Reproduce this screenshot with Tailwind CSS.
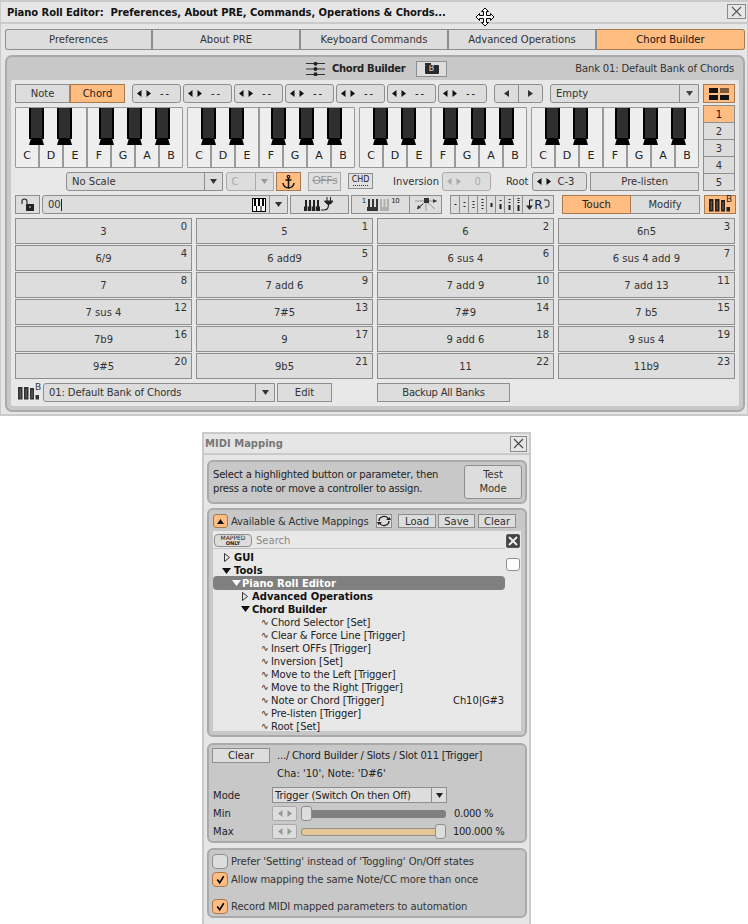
<!DOCTYPE html>
<html lang="en">
<head>
<meta charset="utf-8">
<title>Piano Roll Editor</title>
<script src="https://cdn.jsdelivr.net/npm/@tailwindcss/browser@4"></script>
</head>
<body class="bg-white overflow-hidden font-['DejaVu_Sans',sans-serif] text-[10px] text-[#333]">
<svg class="hidden" width="0" height="0">
  <symbol id="blk" viewBox="0 0 15 37"><rect width="15" height="31" fill="#000"/><rect x="2" width="11" height="31" fill="#2f2f2f"/><path d="M2 30H13L15 37H0Z" fill="#000"/></symbol>
  <symbol id="spin" viewBox="0 0 14 7"><path d="M4.5 0V7L0 3.5Z M9.5 0V7L14 3.5Z" fill="currentColor"/></symbol>
  <symbol id="down" viewBox="0 0 7 5"><path d="M0 0H7L3.5 5Z" fill="currentColor"/></symbol>
  <symbol id="chk" viewBox="0 0 16 16"><path d="M4 8L7 12L12 4" fill="none" stroke="#000" stroke-width="2"/></symbol>
  <symbol id="bank" viewBox="0 0 21 13"><path d="M0 0h4.500v12.500H0zM6 0h4.500v12.500H6zM12 1h4v11.500h-4zM17.500 8h3.500v4.500h-3.500z" fill="currentColor"/><path d="M2.200 2v9M8.200 2v9M14 3v8" stroke="#666" stroke-width="1"/></symbol>
</svg>

<!-- Piano Roll Editor window -->
<div class="relative w-[748px] h-[416px] bg-[#e6e6e6] border-x border-t-2 border-b-2 border-[#cacaca]">
  <div class="flex items-center h-[20px] pl-[6px] font-bold text-[10px] text-[#111]">
    <span class="whitespace-pre tracking-[-0.07px]">Piano Roll Editor:  Preferences, About PRE, Commands, Operations &amp; Chords...</span>
    <div class="ml-auto mr-[1px] mt-[-2px] w-[19px] h-[15px] flex items-center justify-center border border-[#8a8a8a] bg-[#e6e6e6]"><svg width="11" height="11" viewBox="0 0 11 11"><path d="M1 1L10 10M10 1L1 10" stroke="#555" stroke-width="1.100"/></svg></div>
  </div>
  <div class="h-[2px] bg-[#cacaca]"></div>

  <svg class="absolute left-[474px] top-[5px]" width="20" height="20" viewBox="0 0 20 20"><path d="M10 1L13.500 4.500H11.500V8.500H15.500V6.500L19 10L15.500 13.500V11.500H11.500V15.500H13.500L10 19L6.500 15.500H8.500V11.500H4.500V13.500L1 10L4.500 6.500V8.500H8.500V4.500H6.500Z" fill="#fff" stroke="#000" stroke-width="1"/></svg>

  <div class="flex w-[740px] h-[21px] ml-[4px] mt-[5px]">
    <div class="w-[148px] flex items-center justify-center border border-r-2 border-[#8e8e8e] bg-[#dcdddc] rounded-l-[3px]">Preferences</div>
    <div class="w-[148px] flex items-center justify-center border-y border-r-2 border-[#8e8e8e] bg-[#dcdddc]">About PRE</div>
    <div class="w-[148px] flex items-center justify-center border-y border-r-2 border-[#8e8e8e] bg-[#dcdddc]">Keyboard Commands</div>
    <div class="w-[148px] flex items-center justify-center border-y border-r-2 border-[#8e8e8e] bg-[#dcdddc]">Advanced Operations</div>
    <div class="w-[148px] flex items-center justify-center border-y border-r border-[#a8794f] bg-[#ffbd82] text-[#111] rounded-r-[3px]">Chord Builder</div>
  </div>

  <!-- Chord builder panel -->
  <div class="w-[740px] h-[357px] ml-[4px] mt-[5px] border-2 border-[#aaa] rounded-[7px] bg-[#c8c8c8] px-[4px] pb-[4px] flex flex-col">
    <div class="h-[23px] flex items-center shrink-0">
      <svg class="ml-[295px]" width="19" height="14" viewBox="0 0 19 14"><path d="M0 1.500H19M0 7H19M0 12.500H19" stroke="#333" stroke-width="1"/><circle cx="9.500" cy="1.800" r="2" fill="#222"/><circle cx="9.500" cy="7" r="2" fill="#222"/><circle cx="9.500" cy="12.200" r="2" fill="#222"/></svg>
      <span class="ml-[7px] w-[74px] whitespace-nowrap font-bold text-[#222] tracking-[-0.3px]">Chord Builder</span>
      <div class="ml-[10px] w-[31px] h-[16px] flex items-center justify-center border border-[#8e8e8e] bg-[#dcdddc]">
        <div class="relative w-[14px] h-[9px] mt-[1px] bg-[#2a2a2a] rounded-[1px] flex items-center justify-center text-[8px] leading-none text-[#ddd]"><span class="absolute left-0 top-[-2px] w-[6px] h-[2px] bg-[#2a2a2a]"></span>B</div>
      </div>
      <span class="ml-auto mr-[5px] text-[#333] tracking-[-0.15px]">Bank 01: Default Bank of Chords</span>
    </div>

    <div class="flex-1 bg-[#e8e8e8] pl-[4px] pt-[4px] rounded-[2px]">
      <div class="flex w-[720px] gap-[4px]">
        <!-- left -->
        <div class="w-[684px]">
          <div class="flex h-[19px]">
            <div class="w-[55px] flex items-center justify-center border border-[#8e8e8e] bg-[#dcdddc]">Note</div>
            <div class="w-[55px] flex items-center justify-center border border-[#a8794f] bg-[#ffbd82] text-[#222]">Chord</div>
            <div class="ml-[7px] w-[49px] flex items-center border border-[#8e8e8e] bg-[#dcdddc] rounded-[3px] pl-[4px] text-[#111]"><svg class="w-[14px] h-[7px]"><use href="#spin"/></svg><span class="ml-[9px] tracking-[2px]">--</span></div>
            <div class="ml-[2px] w-[49px] flex items-center border border-[#8e8e8e] bg-[#dcdddc] rounded-[3px] pl-[4px] text-[#111]"><svg class="w-[14px] h-[7px]"><use href="#spin"/></svg><span class="ml-[9px] tracking-[2px]">--</span></div>
            <div class="ml-[2px] w-[49px] flex items-center border border-[#8e8e8e] bg-[#dcdddc] rounded-[3px] pl-[4px] text-[#111]"><svg class="w-[14px] h-[7px]"><use href="#spin"/></svg><span class="ml-[9px] tracking-[2px]">--</span></div>
            <div class="ml-[2px] w-[49px] flex items-center border border-[#8e8e8e] bg-[#dcdddc] rounded-[3px] pl-[4px] text-[#111]"><svg class="w-[14px] h-[7px]"><use href="#spin"/></svg><span class="ml-[9px] tracking-[2px]">--</span></div>
            <div class="ml-[2px] w-[49px] flex items-center border border-[#8e8e8e] bg-[#dcdddc] rounded-[3px] pl-[4px] text-[#111]"><svg class="w-[14px] h-[7px]"><use href="#spin"/></svg><span class="ml-[9px] tracking-[2px]">--</span></div>
            <div class="ml-[2px] w-[49px] flex items-center border border-[#8e8e8e] bg-[#dcdddc] rounded-[3px] pl-[4px] text-[#111]"><svg class="w-[14px] h-[7px]"><use href="#spin"/></svg><span class="ml-[9px] tracking-[2px]">--</span></div>
            <div class="ml-[2px] w-[49px] flex items-center border border-[#8e8e8e] bg-[#dcdddc] rounded-[3px] pl-[4px] text-[#111]"><svg class="w-[14px] h-[7px]"><use href="#spin"/></svg><span class="ml-[9px] tracking-[2px]">--</span></div>
            <div class="ml-[7px] w-[49px] flex border border-[#8e8e8e] bg-[#dcdddc] rounded-[3px] text-[#333]">
              <div class="w-[24px] flex items-center justify-center border-r border-[#8e8e8e]"><svg width="5" height="7" viewBox="0 0 5 7"><path d="M5 0V7L0 3.500Z" fill="#333"/></svg></div>
              <div class="flex-1 flex items-center justify-center"><svg width="5" height="7" viewBox="0 0 5 7"><path d="M0 0V7L5 3.500Z" fill="#333"/></svg></div>
            </div>
            <div class="ml-[7px] w-[149px] flex items-center border border-[#8e8e8e] bg-[#dcdddc] rounded-l-[3px] pl-[5px]">Empty<div class="ml-auto w-[19px] h-full flex items-center justify-center border-l border-[#8e8e8e] text-[#444]"><svg class="w-[7px] h-[5px]"><use href="#down"/></svg></div></div>
          </div>

          <!-- piano -->
          <div class="flex gap-[4px] mt-[4px]">
            <div class="relative w-[168px] h-[61px] flex border border-[#999] bg-[#eee] rounded-[1px] text-[11px] text-[#222]">
              <div class="flex-1 flex items-end justify-center border-r-2 border-[#999] pb-[3px]">C</div><div class="flex-1 flex items-end justify-center border-r-2 border-[#999] pb-[3px]">D</div><div class="flex-1 flex items-end justify-center border-r-2 border-[#999] pb-[3px]">E</div><div class="flex-1 flex items-end justify-center border-r-2 border-[#999] pb-[3px]">F</div><div class="flex-1 flex items-end justify-center border-r-2 border-[#999] pb-[3px]">G</div><div class="flex-1 flex items-end justify-center border-r-2 border-[#999] pb-[3px]">A</div><div class="flex-1 flex items-end justify-center pb-[3px]">B</div>
              <svg class="absolute top-0 left-[13px] w-[15px] h-[37px]"><use href="#blk"/></svg><svg class="absolute top-0 left-[41px] w-[15px] h-[37px]"><use href="#blk"/></svg><svg class="absolute top-0 left-[83px] w-[15px] h-[37px]"><use href="#blk"/></svg><svg class="absolute top-0 left-[111px] w-[15px] h-[37px]"><use href="#blk"/></svg><svg class="absolute top-0 left-[139px] w-[15px] h-[37px]"><use href="#blk"/></svg>
            </div>
            <div class="relative w-[168px] h-[61px] flex border border-[#999] bg-[#eee] rounded-[1px] text-[11px] text-[#222]">
              <div class="flex-1 flex items-end justify-center border-r-2 border-[#999] pb-[3px]">C</div><div class="flex-1 flex items-end justify-center border-r-2 border-[#999] pb-[3px]">D</div><div class="flex-1 flex items-end justify-center border-r-2 border-[#999] pb-[3px]">E</div><div class="flex-1 flex items-end justify-center border-r-2 border-[#999] pb-[3px]">F</div><div class="flex-1 flex items-end justify-center border-r-2 border-[#999] pb-[3px]">G</div><div class="flex-1 flex items-end justify-center border-r-2 border-[#999] pb-[3px]">A</div><div class="flex-1 flex items-end justify-center pb-[3px]">B</div>
              <svg class="absolute top-0 left-[13px] w-[15px] h-[37px]"><use href="#blk"/></svg><svg class="absolute top-0 left-[41px] w-[15px] h-[37px]"><use href="#blk"/></svg><svg class="absolute top-0 left-[83px] w-[15px] h-[37px]"><use href="#blk"/></svg><svg class="absolute top-0 left-[111px] w-[15px] h-[37px]"><use href="#blk"/></svg><svg class="absolute top-0 left-[139px] w-[15px] h-[37px]"><use href="#blk"/></svg>
            </div>
            <div class="relative w-[168px] h-[61px] flex border border-[#999] bg-[#eee] rounded-[1px] text-[11px] text-[#222]">
              <div class="flex-1 flex items-end justify-center border-r-2 border-[#999] pb-[3px]">C</div><div class="flex-1 flex items-end justify-center border-r-2 border-[#999] pb-[3px]">D</div><div class="flex-1 flex items-end justify-center border-r-2 border-[#999] pb-[3px]">E</div><div class="flex-1 flex items-end justify-center border-r-2 border-[#999] pb-[3px]">F</div><div class="flex-1 flex items-end justify-center border-r-2 border-[#999] pb-[3px]">G</div><div class="flex-1 flex items-end justify-center border-r-2 border-[#999] pb-[3px]">A</div><div class="flex-1 flex items-end justify-center pb-[3px]">B</div>
              <svg class="absolute top-0 left-[13px] w-[15px] h-[37px]"><use href="#blk"/></svg><svg class="absolute top-0 left-[41px] w-[15px] h-[37px]"><use href="#blk"/></svg><svg class="absolute top-0 left-[83px] w-[15px] h-[37px]"><use href="#blk"/></svg><svg class="absolute top-0 left-[111px] w-[15px] h-[37px]"><use href="#blk"/></svg><svg class="absolute top-0 left-[139px] w-[15px] h-[37px]"><use href="#blk"/></svg>
            </div>
            <div class="relative w-[168px] h-[61px] flex border border-[#999] bg-[#eee] rounded-[1px] text-[11px] text-[#222]">
              <div class="flex-1 flex items-end justify-center border-r-2 border-[#999] pb-[3px]">C</div><div class="flex-1 flex items-end justify-center border-r-2 border-[#999] pb-[3px]">D</div><div class="flex-1 flex items-end justify-center border-r-2 border-[#999] pb-[3px]">E</div><div class="flex-1 flex items-end justify-center border-r-2 border-[#999] pb-[3px]">F</div><div class="flex-1 flex items-end justify-center border-r-2 border-[#999] pb-[3px]">G</div><div class="flex-1 flex items-end justify-center border-r-2 border-[#999] pb-[3px]">A</div><div class="flex-1 flex items-end justify-center pb-[3px]">B</div>
              <svg class="absolute top-0 left-[13px] w-[15px] h-[37px]"><use href="#blk"/></svg><svg class="absolute top-0 left-[41px] w-[15px] h-[37px]"><use href="#blk"/></svg><svg class="absolute top-0 left-[83px] w-[15px] h-[37px]"><use href="#blk"/></svg><svg class="absolute top-0 left-[111px] w-[15px] h-[37px]"><use href="#blk"/></svg><svg class="absolute top-0 left-[139px] w-[15px] h-[37px]"><use href="#blk"/></svg>
            </div>
          </div>

          <!-- scale row -->
          <div class="flex h-[19px] mt-[4px] items-stretch">
            <div class="ml-[51px] w-[157px] flex items-center border border-[#8e8e8e] bg-[#dcdddc] rounded-l-[3px] pl-[5px]">No Scale<div class="ml-auto w-[18px] h-full flex items-center justify-center border-l border-[#8e8e8e] text-[#333]"><svg class="w-[7px] h-[5px]"><use href="#down"/></svg></div></div>
            <div class="ml-[3px] w-[49px] flex items-center border border-[#aaa] bg-[#dcdddc] rounded-l-[3px] pl-[5px] text-[#aaa]">C<div class="ml-auto w-[18px] h-full flex items-center justify-center border-l border-[#aaa] text-[#999]"><svg class="w-[7px] h-[5px]"><use href="#down"/></svg></div></div>
            <div class="ml-[2px] w-[25px] flex items-center justify-center border border-[#a8794f] bg-[#ffbd82]"><svg width="13" height="14" viewBox="0 0 13 14"><circle cx="6.500" cy="1.800" r="1.300" fill="none" stroke="#111" stroke-width="1.100"/><path d="M6.500 3V13M3.500 5H9.500M1 8Q1.500 12.500 6.500 13Q11.500 12.500 12 8" fill="none" stroke="#111" stroke-width="1.500"/></svg></div>
            <div class="ml-[7px] w-[33px] flex items-center justify-center border border-[#aaa] bg-[#e0e0e0] text-[11px] tracking-[-0.5px] text-[#999] line-through">OFFs</div>
            <div class="ml-[7px] w-[25px] mb-[2px] mt-[1px] flex flex-col items-center border border-[#8e8e8e] bg-[#e0e0e0] text-[8px] leading-[9px] text-[#222]"><span class="mt-[1px]">CHD</span><span class="w-[15px] mt-[1px] border-t border-dotted border-[#333]"></span></div>
            <span class="ml-[20px] self-center text-[#333]">Inversion</span>
            <div class="ml-[3px] w-[49px] flex items-center border border-[#aaa] bg-[#dcdddc] rounded-[3px] pl-[4px] text-[#aaa]"><svg class="w-[14px] h-[7px]"><use href="#spin"/></svg><span class="ml-auto mr-[9px]">0</span></div>
            <span class="ml-[15px] self-center text-[#333]">Root</span>
            <div class="ml-[3px] w-[56px] flex items-center border border-[#8e8e8e] bg-[#dcdddc] rounded-[3px] pl-[4px] text-[#333]"><svg class="w-[14px] h-[7px] text-[#111]"><use href="#spin"/></svg><span class="ml-[7px]">C-3</span></div>
            <div class="ml-[3px] w-[109px] flex items-center justify-center border border-[#8e8e8e] bg-[#dcdddc]">Pre-listen</div>
          </div>
        </div>
        <!-- right -->
        <div class="w-[32px] flex flex-col">
          <div class="h-[19px] flex items-center justify-center border border-[#a8794f] bg-[#ffbd82]"><svg width="20" height="12" viewBox="0 0 20 12"><rect x="0" y="0" width="9" height="5" fill="#111"/><rect x="11" y="0" width="9" height="5" fill="#7e5a36"/><rect x="0" y="7" width="9" height="5" fill="#111"/><rect x="11" y="7" width="9" height="5" fill="#111"/></svg></div>
          <div class="mt-[2px] flex flex-col border-t border-[#8e8e8e]">
            <div class="h-[17px] flex items-center justify-center border-x border-b border-[#8e8e8e] bg-[#ffbd82] text-[#111]">1</div>
            <div class="h-[17px] flex items-center justify-center border-x border-b border-[#8e8e8e] bg-[#dcdddc]">2</div>
            <div class="h-[17px] flex items-center justify-center border-x border-b border-[#8e8e8e] bg-[#dcdddc]">3</div>
            <div class="h-[17px] flex items-center justify-center border-x border-b border-[#8e8e8e] bg-[#dcdddc]">4</div>
            <div class="h-[17px] flex items-center justify-center border-x border-b border-[#8e8e8e] bg-[#dcdddc]">5</div>
          </div>
        </div>
      </div>

      <!-- toolbar row -->
      <div class="flex h-[19px] mt-[4px]">
        <div class="w-[25px] flex items-center justify-center border border-[#8e8e8e] bg-[#dcdddc]"><svg width="13" height="13" viewBox="0 0 13 13"><path d="M1 6V3.500Q1 1 3.500 1T6 3.500V6" fill="none" stroke="#222" stroke-width="1.100"/><rect x="5" y="6" width="8" height="7" fill="#222"/><rect x="8" y="8.500" width="2" height="1" fill="#ddd"/></svg></div>
        <div class="ml-[2px] w-[246px] flex items-center border border-[#8e8e8e] bg-[#dcdddc] rounded-l-[3px] pl-[5px]"><span>00</span><span class="w-px h-[12px] bg-[#222]"></span>
          <svg class="ml-auto mr-[3px]" width="14" height="14" viewBox="0 0 14 14"><rect x="0.500" y="0.500" width="13" height="13" fill="#fff" stroke="#000"/><path d="M2 1h2v7H2zM6 1h2v7H6zM10 1h2v7h-2z" fill="#000"/><path d="M4.500 8v5M9 8v5" stroke="#000"/></svg>
          <div class="w-[18px] h-full flex items-center justify-center border-l border-[#8e8e8e]"><svg class="w-[7px] h-[5px] text-[#333]"><use href="#down"/></svg></div>
        </div>
        <div class="ml-[2px] w-[59px] flex items-center justify-center border border-[#8e8e8e] bg-[#dcdddc]"><svg width="31" height="15" viewBox="0 0 31 15"><path d="M1 3h2v11H1zM5 3h2v11H5zM9 3h2v11H9zM13 3h2v11h-2z" fill="#222"/><path d="M0 9.500h16V14H0z" fill="#222"/><path d="M3.500 9.500v4.500M7.500 9.500v4.500M11.500 9.500v4.500" stroke="#dcdddc" stroke-width="0.700"/><path d="M17 13H20Q24.500 13 24.500 8V6" fill="none" stroke="#222" stroke-width="1.200"/><path d="M20.500 4H29L26.500 7H23Z M23 0v4M26.500 0v4" fill="#222" stroke="#222" stroke-width="1"/></svg></div>
        <div class="ml-[2px] w-[91px] flex border border-[#8e8e8e] bg-[#dcdddc]">
          <div class="w-[58px] flex items-center justify-center border-r border-[#8e8e8e]"><span class="text-[7px] self-start leading-[9px] mt-[1px] text-[#222]">1</span><svg class="ml-[1px]" width="22" height="15" viewBox="0 0 22 15"><path d="M1 2h2v12H1zM5 2h2v12H5zM9 2h2v12H9z" fill="#333"/><path d="M13 2h2v12h-2zM16.500 2h2v12h-2zM20 2h2v12h-2z" fill="#b0b0b0"/><path d="M0 10h11v4H0z" fill="#333"/><path d="M13 10h9v4h-9z" fill="#b0b0b0"/></svg><span class="text-[7px] self-start leading-[9px] mt-[1px] ml-[2px] tracking-[-0.5px] text-[#222]">10</span></div>
          <div class="flex-1 flex items-center justify-center"><svg width="24" height="15" viewBox="0 0 24 15"><path d="M12 4H1M12 4H23M12 4L3 12M12 4L21 12M12 4V14" stroke="#999" fill="none"/><rect x="10" y="1" width="5" height="5" fill="#333"/><path d="M23 4L19 2V6ZM3 12L4 8L7 11Z" fill="#333"/><path d="M3 12L9 7" stroke="#333"/></svg></div>
        </div>
        <div class="ml-[8px] w-[104px] flex border border-[#8e8e8e] bg-[#dcdddc]">
          <div class="w-[9px] flex items-center justify-center border-r border-[#8e8e8e]"><svg width="3" height="13" viewBox="0 0 3 13"><rect x="0.500" y="6" width="2" height="1" fill="#222"/></svg></div>
          <div class="w-[9px] flex items-center justify-center border-r border-[#8e8e8e]"><svg width="3" height="13" viewBox="0 0 3 13"><path d="M.5 4h2v1h-2zM.5 8h2v1h-2z" fill="#222"/></svg></div>
          <div class="w-[9px] flex items-center justify-center border-r border-[#8e8e8e]"><svg width="3" height="13" viewBox="0 0 3 13"><path d="M.5 3h2v1h-2zM.5 6h2v1h-2zM.5 9h2v1h-2z" fill="#222"/></svg></div>
          <div class="w-[9px] flex items-center justify-center border-r border-[#8e8e8e]"><svg width="3" height="13" viewBox="0 0 3 13"><path d="M.5 1h2v1h-2zM.5 4h2v1h-2zM.5 7h2v1h-2zM.5 10h2v1h-2z" fill="#222"/></svg></div>
          <div class="w-[9px] flex items-center justify-center border-r border-[#8e8e8e]"><svg width="3" height="13" viewBox="0 0 3 13"><path d="M.5 5h2v4h-2z" fill="#222"/></svg></div>
          <div class="w-[9px] flex items-center justify-center border-r border-[#8e8e8e]"><svg width="3" height="13" viewBox="0 0 3 13"><path d="M.5 2h2v1h-2zM.5 6h2v5h-2z" fill="#222"/></svg></div>
          <div class="w-[9px] flex items-center justify-center border-r border-[#8e8e8e]"><svg width="3" height="13" viewBox="0 0 3 13"><path d="M.5 1h2v1h-2zM.5 4h2v1h-2zM.5 7h2v5h-2z" fill="#222"/></svg></div>
          <div class="w-[9px] flex items-center justify-center border-r border-[#8e8e8e]"><svg width="3" height="13" viewBox="0 0 3 13"><path d="M.5 0h2v1h-2zM.5 2h2v1h-2zM.5 4h2v1h-2zM.5 7h2v6h-2z" fill="#222"/></svg></div>
          <div class="flex-1 flex items-center justify-center gap-[1px]"><svg width="7" height="11" viewBox="0 0 7 11" class="shrink-0"><path d="M3.500 1H7M3.500 1V7" stroke="#222" fill="none"/><path d="M0 6.500H7L3.500 11Z" fill="#222"/></svg><span class="text-[12px] leading-none text-[#222]">R</span><svg width="6" height="11" viewBox="0 0 6 11"><path d="M0 1H3Q5 1 5 3V6Q5 8 3 8H1" fill="none" stroke="#222"/></svg></div>
        </div>
        <div class="ml-[8px] w-[69px] flex items-center justify-center border border-[#a8794f] bg-[#ffbd82] text-[#222]">Touch</div>
        <div class="w-[69px] flex items-center justify-center border-y border-r border-[#8e8e8e] bg-[#dcdddc]">Modify</div>
        <div class="relative ml-[4px] w-[32px] flex items-end pb-[1px] pl-[4px] border border-[#a8794f] bg-[#ffbd82] text-[#222]"><svg class="w-[21px] h-[13px]"><use href="#bank"/></svg><span class="absolute left-[21px] top-[-2px] text-[9px] leading-[11px]">B</span></div>
      </div>

      <!-- chord grid -->
      <div class="grid grid-cols-[177px_177px_177px_177px] auto-rows-[26px] gap-x-[4px] gap-y-[1px] mt-[4px]">
        <div class="relative flex items-center justify-center border border-[#8e8e8e] bg-[#dcdddc]">3<span class="absolute right-[4px] top-0">0</span></div>
        <div class="relative flex items-center justify-center border border-[#8e8e8e] bg-[#dcdddc]">5<span class="absolute right-[4px] top-0">1</span></div>
        <div class="relative flex items-center justify-center border border-[#8e8e8e] bg-[#dcdddc]">6<span class="absolute right-[4px] top-0">2</span></div>
        <div class="relative flex items-center justify-center border border-[#8e8e8e] bg-[#dcdddc]">6n5<span class="absolute right-[4px] top-0">3</span></div>
        <div class="relative flex items-center justify-center border border-[#8e8e8e] bg-[#dcdddc]">6/9<span class="absolute right-[4px] top-0">4</span></div>
        <div class="relative flex items-center justify-center border border-[#8e8e8e] bg-[#dcdddc]">6 add9<span class="absolute right-[4px] top-0">5</span></div>
        <div class="relative flex items-center justify-center border border-[#8e8e8e] bg-[#dcdddc]">6 sus 4<span class="absolute right-[4px] top-0">6</span></div>
        <div class="relative flex items-center justify-center border border-[#8e8e8e] bg-[#dcdddc]">6 sus 4 add 9<span class="absolute right-[4px] top-0">7</span></div>
        <div class="relative flex items-center justify-center border border-[#8e8e8e] bg-[#dcdddc]">7<span class="absolute right-[4px] top-0">8</span></div>
        <div class="relative flex items-center justify-center border border-[#8e8e8e] bg-[#dcdddc]">7 add 6<span class="absolute right-[4px] top-0">9</span></div>
        <div class="relative flex items-center justify-center border border-[#8e8e8e] bg-[#dcdddc]">7 add 9<span class="absolute right-[4px] top-0">10</span></div>
        <div class="relative flex items-center justify-center border border-[#8e8e8e] bg-[#dcdddc]">7 add 13<span class="absolute right-[4px] top-0">11</span></div>
        <div class="relative flex items-center justify-center border border-[#8e8e8e] bg-[#dcdddc]">7 sus 4<span class="absolute right-[4px] top-0">12</span></div>
        <div class="relative flex items-center justify-center border border-[#8e8e8e] bg-[#dcdddc]">7#5<span class="absolute right-[4px] top-0">13</span></div>
        <div class="relative flex items-center justify-center border border-[#8e8e8e] bg-[#dcdddc]">7#9<span class="absolute right-[4px] top-0">14</span></div>
        <div class="relative flex items-center justify-center border border-[#8e8e8e] bg-[#dcdddc]">7 b5<span class="absolute right-[4px] top-0">15</span></div>
        <div class="relative flex items-center justify-center border border-[#8e8e8e] bg-[#dcdddc]">7b9<span class="absolute right-[4px] top-0">16</span></div>
        <div class="relative flex items-center justify-center border border-[#8e8e8e] bg-[#dcdddc]">9<span class="absolute right-[4px] top-0">17</span></div>
        <div class="relative flex items-center justify-center border border-[#8e8e8e] bg-[#dcdddc]">9 add 6<span class="absolute right-[4px] top-0">18</span></div>
        <div class="relative flex items-center justify-center border border-[#8e8e8e] bg-[#dcdddc]">9 sus 4<span class="absolute right-[4px] top-0">19</span></div>
        <div class="relative flex items-center justify-center border border-[#8e8e8e] bg-[#dcdddc]">9#5<span class="absolute right-[4px] top-0">20</span></div>
        <div class="relative flex items-center justify-center border border-[#8e8e8e] bg-[#dcdddc]">9b5<span class="absolute right-[4px] top-0">21</span></div>
        <div class="relative flex items-center justify-center border border-[#8e8e8e] bg-[#dcdddc]">11<span class="absolute right-[4px] top-0">22</span></div>
        <div class="relative flex items-center justify-center border border-[#8e8e8e] bg-[#dcdddc]">11b9<span class="absolute right-[4px] top-0">23</span></div>
      </div>

      <!-- bank row -->
      <div class="flex h-[19px] mt-[4px]">
        <div class="relative w-[28px] flex items-end pb-[2px] text-[#333]"><svg class="ml-[3px] w-[21px] h-[13px]"><use href="#bank"/></svg><span class="absolute left-[20px] top-[-1px] text-[9px] leading-[11px]">B</span></div>
        <div class="w-[232px] flex items-center border border-[#8e8e8e] bg-[#dcdddc] rounded-l-[3px] pl-[5px] tracking-[-0.1px]">01: Default Bank of Chords<div class="ml-auto w-[19px] h-full flex items-center justify-center border-l border-[#8e8e8e]"><svg class="w-[7px] h-[5px]"><use href="#down"/></svg></div></div>
        <div class="ml-[2px] w-[55px] flex items-center justify-center border border-[#8e8e8e] bg-[#dcdddc]">Edit</div>
        <div class="ml-[45px] w-[133px] flex items-center justify-center border border-[#8e8e8e] bg-[#dcdddc] tracking-[-0.2px]">Backup All Banks</div>
      </div>
    </div>
  </div>
</div>

<!-- MIDI Mapping window -->
<div class="ml-[202px] mt-[16px] w-[329px] h-[492px] bg-[#e6e6e6] border-x-2 border-t-2 border-[#cacaca]">
  <div class="flex items-center h-[19px] pl-[1px] font-bold text-[#777]">MIDI Mapping
    <div class="ml-auto mr-[2px] w-[17px] h-[16px] flex items-center justify-center border border-[#8a8a8a]"><svg width="11" height="11" viewBox="0 0 11 11"><path d="M1 1L10 10M10 1L1 10" stroke="#444" stroke-width="1.100"/></svg></div>
  </div>
  <div class="h-[2px] bg-[#cacaca]"></div>

  <div class="ml-[3px] w-[320px] mt-[5px] flex flex-col">
    <div class="h-[44px] border-2 border-[#aaa] rounded-[6px] bg-[#c8c8c8] flex items-center pl-[4px] pr-[3px]">
      <div class="leading-[14px] text-[#222] tracking-[-0.2px]">Select a highlighted button or parameter, then<br>press a note or move a controller to assign.</div>
      <div class="ml-auto w-[58px] h-[34px] flex items-center justify-center text-center leading-[14px] border border-[#8e8e8e] bg-[#dcdddc] rounded-[3px]">Test<br>Mode</div>
    </div>

    <div class="mt-[4px] h-[229px] border-2 border-[#aaa] rounded-[6px] bg-[#c8c8c8] px-[4px] flex flex-col">
      <div class="flex h-[14px] mt-[4px] shrink-0">
        <div class="w-[15px] flex items-center justify-center border border-[#a8794f] bg-[#ffbd82] rounded-[3px]"><svg width="7" height="5" viewBox="0 0 7 5"><path d="M0 5H7L3.500 0Z" fill="#111"/></svg></div>
        <span class="ml-[3px] w-[137px] whitespace-nowrap self-center text-[#333] tracking-[-0.15px]">Available &amp; Active Mappings</span>
        <div class="ml-[8px] w-[16px] flex items-center justify-center border border-[#8e8e8e] bg-[#dcdddc]"><svg width="14" height="12" viewBox="0 0 14 12"><path d="M2 6A5 4.500 0 0 1 11.500 4M12 6A5 4.500 0 0 1 2.500 8" fill="none" stroke="#222" stroke-width="1.400"/><path d="M9 5H14L12.500 2ZM5 7H0L1.500 10Z" fill="#222"/></svg></div>
        <div class="ml-[6px] w-[38px] flex items-center justify-center border border-[#8e8e8e] bg-[#dcdddc]">Load</div>
        <div class="ml-[2px] w-[37px] flex items-center justify-center border border-[#8e8e8e] bg-[#dcdddc]">Save</div>
        <div class="ml-[3px] w-[38px] flex items-center justify-center border border-[#8e8e8e] bg-[#dcdddc]">Clear</div>
      </div>
      <div class="relative mt-[3px] h-[200px] w-[308px] bg-[#e8e8e8] flex flex-col shrink-0">
        <div class="relative h-[18px] w-[292px] pt-[1px] flex items-center border-b border-[#c4c4c4] shrink-0">
          <div class="ml-[1px] w-[38px] h-[13px] flex flex-col items-center justify-center border border-[#8e8e8e] bg-[#dcdddc] rounded-[4px] text-[6px] leading-[6px] text-[#222]"><span>MAPPED</span><span class="text-[5px] leading-[5px] font-bold">ONLY</span></div>
          <span class="ml-[4px] text-[#888]">Search</span>
        </div>
        <div class="absolute right-[1px] top-[3px] w-[14px] h-[14px] flex items-center justify-center border border-[#555] bg-[#444] rounded-[2px]"><svg width="10" height="10" viewBox="0 0 10 10"><path d="M1 1L9 9M9 1L1 9" stroke="#eee" stroke-width="2"/></svg></div>
        <div class="absolute right-[1px] top-[27px] w-[14px] h-[13px] border border-[#8e8e8e] bg-white rounded-[3px]"></div>
        <div class="w-[292px] mt-[2px] leading-[13px] text-[#222]">
          <div class="flex items-center h-[13px] pl-[11px] font-bold text-[#111]"><svg class="w-[6px] h-[9px] mr-[4px]" viewBox="0 0 6 9"><path d="M.5 .5V8.500L5.500 4.500Z" fill="none" stroke="#333"/></svg>GUI</div>
          <div class="flex items-center h-[13px] pl-[9px] font-bold text-[#111]"><svg class="w-[9px] h-[6px] mr-[3px]" viewBox="0 0 9 6"><path d="M0 0H9L4.500 6Z" fill="#111"/></svg>Tools</div>
          <div class="flex items-center h-[14px] mt-[-1px] pl-[19px] font-bold text-white bg-[#808080] rounded-[4px]"><svg class="w-[9px] h-[6px] mr-[1px]" viewBox="0 0 9 6"><path d="M0 0H9L4.500 6Z" fill="#fff"/></svg>Piano Roll Editor</div>
          <div class="flex items-center h-[13px] mt-[-0.5px] pl-[29px] font-bold text-[#111]"><svg class="w-[6px] h-[9px] mr-[4px]" viewBox="0 0 6 9"><path d="M.5 .5V8.500L5.500 4.500Z" fill="none" stroke="#333"/></svg>Advanced Operations</div>
          <div class="flex items-center h-[13px] pl-[28px] font-bold text-[#111] tracking-[-0.2px]"><svg class="w-[9px] h-[6px] mr-[2px]" viewBox="0 0 9 6"><path d="M0 0H9L4.500 6Z" fill="#111"/></svg>Chord Builder</div>
          <div class="flex items-center h-[13px] pl-[48px] tracking-[-0.1px]"><span class="w-[10px] text-[9px]">∿</span>Chord Selector [Set]</div>
          <div class="flex items-center h-[13px] pl-[48px] tracking-[-0.1px]"><span class="w-[10px] text-[9px]">∿</span>Clear &amp; Force Line [Trigger]</div>
          <div class="flex items-center h-[13px] pl-[48px] tracking-[-0.1px]"><span class="w-[10px] text-[9px]">∿</span>Insert OFFs [Trigger]</div>
          <div class="flex items-center h-[13px] pl-[48px] tracking-[-0.1px]"><span class="w-[10px] text-[9px]">∿</span>Inversion [Set]</div>
          <div class="flex items-center h-[13px] pl-[48px] tracking-[-0.1px]"><span class="w-[10px] text-[9px]">∿</span>Move to the Left [Trigger]</div>
          <div class="flex items-center h-[13px] pl-[48px] tracking-[-0.1px]"><span class="w-[10px] text-[9px]">∿</span>Move to the Right [Trigger]</div>
          <div class="flex items-center h-[13px] pl-[48px] tracking-[-0.1px]"><span class="w-[10px] text-[9px]">∿</span>Note or Chord [Trigger]<span class="ml-auto w-[52px]">Ch10|G#3</span></div>
          <div class="flex items-center h-[13px] pl-[48px] tracking-[-0.1px]"><span class="w-[10px] text-[9px]">∿</span>Pre-listen [Trigger]</div>
          <div class="flex items-center h-[13px] pl-[48px] tracking-[-0.1px]"><span class="w-[10px] text-[9px]">∿</span>Root [Set]</div>
        </div>
      </div>
    </div>

    <div class="mt-[6px] h-[100px] border-2 border-[#aaa] rounded-[6px] bg-[#c8c8c8] px-[3px] flex flex-col text-[#222]">
      <div class="flex h-[15px] mt-[3px] items-center">
        <div class="w-[58px] h-full flex items-center justify-center border border-[#8e8e8e] bg-[#dcdddc]">Clear</div>
        <span class="ml-[7px] tracking-[-0.21px]">.../ Chord Builder / Slots / Slot 011 [Trigger]</span>
      </div>
      <div class="ml-[65px] mt-[4px] h-[14px] leading-[14px]">Cha: '10', Note: 'D#6'</div>
      <div class="flex h-[16px] mt-[6px] items-center">
        <span class="w-[60px] pl-[1px]">Mode</span>
        <div class="w-[175px] h-full flex items-center border border-[#8e8e8e] bg-[#dcdddc] pl-[2px] tracking-[-0.15px]">Trigger (Switch On then Off)<div class="ml-auto w-[15px] h-full flex items-center justify-center border-l border-[#8e8e8e]"><svg class="w-[7px] h-[5px]"><use href="#down"/></svg></div></div>
      </div>
      <div class="flex h-[15px] mt-[3px] items-center">
        <span class="w-[60px] pl-[1px]">Min</span>
        <div class="w-[25px] h-full flex items-center justify-center border border-[#aaa] bg-[#dcdddc] rounded-[2px] text-[#999]"><svg class="w-[14px] h-[7px]"><use href="#spin"/></svg></div>
        <div class="relative ml-[4px] w-[145px] h-[8px] bg-[#808080] rounded-[3px]"><div class="absolute left-0 top-[-4px] w-[11px] h-[15px] border border-[#8e8e8e] bg-[#dcdddc] rounded-[3px]"></div></div>
        <span class="ml-[8px] tracking-[-0.3px]">0.000 %</span>
      </div>
      <div class="flex h-[15px] mt-[3px] items-center">
        <span class="w-[60px] pl-[1px]">Max</span>
        <div class="w-[25px] h-full flex items-center justify-center border border-[#aaa] bg-[#dcdddc] rounded-[2px] text-[#999]"><svg class="w-[14px] h-[7px]"><use href="#spin"/></svg></div>
        <div class="relative ml-[4px] w-[145px] h-[8px] bg-[#e4c795] border border-[#8e8e8e] rounded-[3px]"><div class="absolute right-[-1px] top-[-5px] w-[11px] h-[15px] border border-[#8e8e8e] bg-[#dcdddc] rounded-[3px]"></div></div>
        <span class="ml-[7px] tracking-[-0.3px]">100.000 %</span>
      </div>
    </div>

    <div class="mt-[5px] h-[70px] border-2 border-[#aaa] rounded-[6px] bg-[#c8c8c8] px-[3px] text-[#333] tracking-[-0.07px]">
      <div class="flex h-[16px] mt-[3px] items-center"><div class="w-[16px] h-[15px] border border-[#8e8e8e] bg-[#dcdddc] rounded-[4px]"></div><span class="ml-[3px]">Prefer 'Setting' instead of 'Toggling' On/Off states</span></div>
      <div class="flex h-[16px] mt-[2px] items-center"><div class="w-[16px] h-[15px] flex items-center justify-center border border-[#a8794f] bg-[#ffbd82] rounded-[4px]"><svg class="w-[13px] h-[13px]"><use href="#chk"/></svg></div><span class="ml-[3px]">Allow mapping the same Note/CC more than once</span></div>
      <div class="flex h-[16px] mt-[11px] items-center"><div class="w-[16px] h-[15px] flex items-center justify-center border border-[#a8794f] bg-[#ffbd82] rounded-[4px]"><svg class="w-[13px] h-[13px]"><use href="#chk"/></svg></div><span class="ml-[3px]">Record MIDI mapped parameters to automation</span></div>
    </div>
  </div>
</div>
</body>
</html>
